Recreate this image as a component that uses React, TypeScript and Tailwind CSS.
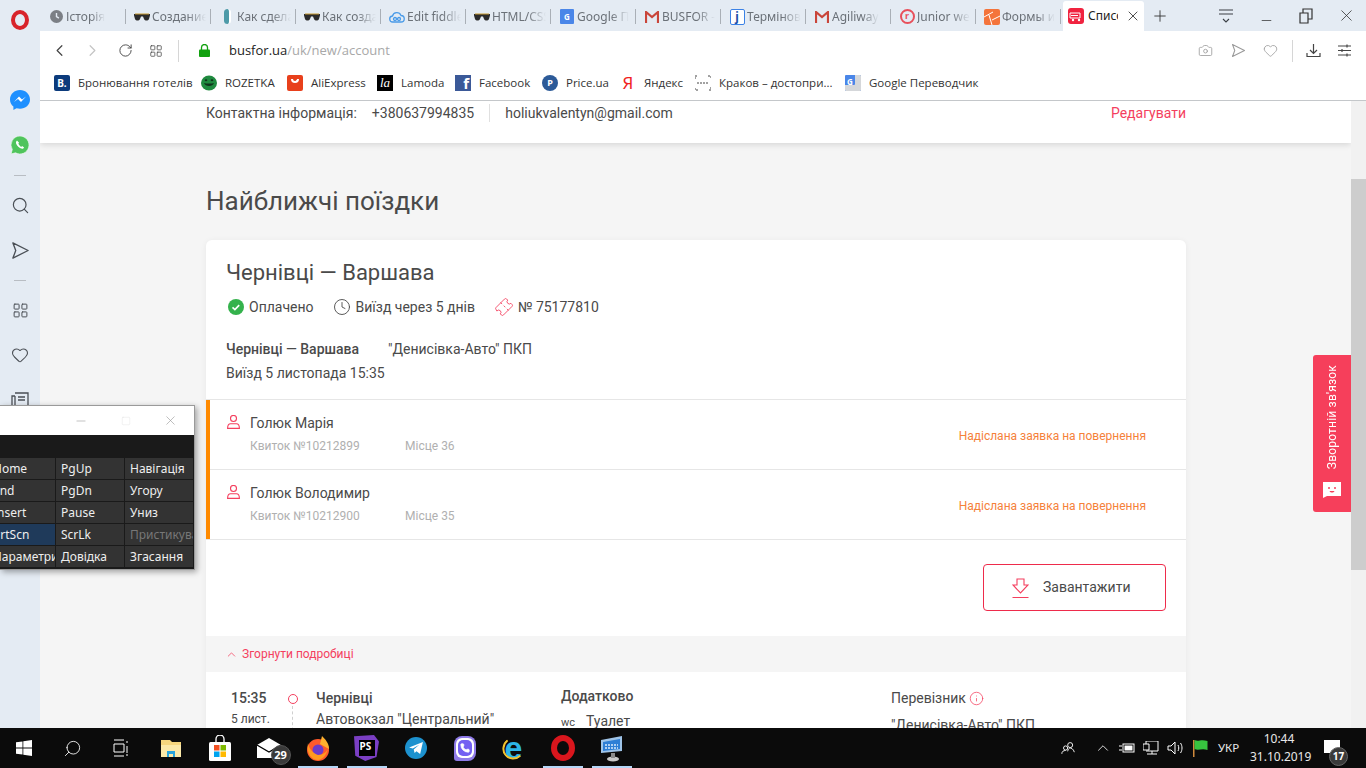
import type { ReactNode } from 'react';
import {
  ChevronLeft,
  ChevronRight,
  ChevronUp,
  Camera,
  Clock,
  Heart,
  Info,
  LayoutGrid,
  Minus,
  Phone,
  Plus,
  RotateCw,
  Search,
  Square,
  Ticket,
  X,
} from 'lucide-react';

const Glasses = () => (
  <svg width="16" height="10" viewBox="0 0 16 10">
    <path d="M0 2h16v1.500L15 7c-1 2-4 2-5 0L9 4.500H7L6 7C5 9 2 9 1 7L0 3.500z" fill="#2b2b2b" />
    <path d="M1 2h14" stroke="#c99a2e" strokeWidth="1" />
  </svg>
);

const Plane = ({ size, color, className }: { size: number; color: string; className?: string }) => (
  <svg width={size} height={size} viewBox="0 0 20 20" fill="none" stroke={color} strokeWidth="1.400" strokeLinejoin="round" className={className}>
    <path d="M2 2l16 8-16 8 3-8z" />
  </svg>
);

const TABS: { icon: ReactNode; label: string }[] = [
  {
    icon: (
      <span className="w-[13px] h-[13px] rounded-full bg-[#7b7f85] flex items-center justify-center">
        <svg width="13" height="13" viewBox="0 0 13 13" fill="none" stroke="#e4ebf3" strokeWidth="1.400">
          <path d="M6.500 3v3.700l2.400 1.500" />
        </svg>
      </span>
    ),
    label: 'Історія',
  },
  { icon: <Glasses />, label: 'Создание' },
  {
    icon: <span className="w-[7px] h-[15px] rounded-full bg-[#4d9aa8] border-r-2 border-white" />,
    label: 'Как сдела',
  },
  { icon: <Glasses />, label: 'Как созда' },
  {
    icon: (
      <svg width="16" height="12" viewBox="0 0 16 12" fill="none" stroke="#4a9be8" strokeWidth="1.300">
        <path d="M4 11a3 3 0 0 1-.5-6A4.500 4.500 0 0 1 12 4.500 3.200 3.200 0 0 1 12 11z" />
        <circle cx="6" cy="8" r="1.500" />
        <circle cx="10" cy="8" r="1.500" />
      </svg>
    ),
    label: 'Edit fiddle',
  },
  { icon: <Glasses />, label: 'HTML/CSS' },
  {
    icon: (
      <span className="w-[14px] h-[15px] bg-[#4a86e8] rounded-[1px] text-white text-[8px] font-bold flex items-center justify-center">G</span>
    ),
    label: 'Google П',
  },
  {
    icon: (
      <svg width="14" height="12" viewBox="0 0 14 12">
        <path d="M1 12V1l6 5 6-5v11" fill="none" stroke="#c9453a" strokeWidth="2.200" />
      </svg>
    ),
    label: 'BUSFOR -',
  },
  {
    icon: (
      <span className="w-[15px] h-[16px] border border-[#3b82e6] rounded-[2px] bg-white text-[#1d4fa8] text-[12px] leading-[14px] font-bold text-center">j</span>
    ),
    label: 'Термінов',
  },
  {
    icon: (
      <svg width="14" height="12" viewBox="0 0 14 12">
        <path d="M1 12V1l6 5 6-5v11" fill="none" stroke="#c9453a" strokeWidth="2.200" />
      </svg>
    ),
    label: 'Agiliway',
  },
  {
    icon: (
      <span className="w-[15px] h-[15px] rounded-full border-2 border-[#e8505b] text-[#e8505b] text-[9px] leading-[10px] font-bold text-center">r</span>
    ),
    label: 'Junior we',
  },
  {
    icon: (
      <svg width="16" height="16" viewBox="0 0 16 16">
        <rect width="16" height="16" rx="2" fill="#f4743b" />
        <path d="M0 8l9-5M5 6l3 10M8 11l8-4" stroke="#fff" strokeWidth="1" />
      </svg>
    ),
    label: 'Формы и',
  },
];

const BOOKMARKS: { icon: ReactNode; label: string; width: string }[] = [
  {
    icon: <span className="w-4 h-4 rounded-[2px] bg-[#0c3b7c] text-white text-[10px] font-bold flex items-center justify-center">B.</span>,
    label: 'Бронювання готелів',
    width: 'w-[147px]',
  },
  {
    icon: (
      <svg width="16" height="16" viewBox="0 0 16 20" preserveAspectRatio="none">
        <ellipse cx="8" cy="10" rx="8" ry="9.500" fill="#1f8a3f" />
        <path d="M3 10c2 1 8 1 10 0-1 5-9 5-10 0z" fill="#10331c" />
        <circle cx="5" cy="6.500" r="1.300" fill="#10331c" />
        <circle cx="11" cy="6.500" r="1.300" fill="#10331c" />
      </svg>
    ),
    label: 'ROZETKA',
    width: 'w-[86px]',
  },
  {
    icon: (
      <span className="w-4 h-4 rounded-[2px] bg-[#e8401c] flex items-start justify-center pt-1">
        <span className="w-2 h-1 border-b-2 border-x-2 border-white rounded-b-full" />
      </span>
    ),
    label: 'AliExpress',
    width: 'w-[90px]',
  },
  {
    icon: <span className="w-4 h-4 bg-black text-white text-[13px] italic flex items-center justify-center [font-family:'Liberation_Serif',serif]">la</span>,
    label: 'Lamoda',
    width: 'w-[78px]',
  },
  {
    icon: <span className="w-4 h-4 bg-[#3b5998] text-white text-[15px] font-bold flex items-end justify-end pr-[2px] leading-[16px] overflow-hidden">f</span>,
    label: 'Facebook',
    width: 'w-[87px]',
  },
  {
    icon: <span className="w-4 h-4 rounded-full bg-[#2c5a98] text-white text-[9px] font-bold flex items-center justify-center">P</span>,
    label: 'Price.ua',
    width: 'w-[78px]',
  },
  {
    icon: <span className="w-4 text-center text-[#f01f1f] text-[17px] leading-[16px]">Я</span>,
    label: 'Яндекс',
    width: 'w-[75px]',
  },
  {
    icon: (
      <svg width="16" height="16" viewBox="0 0 16 16" fill="none" stroke="#444" strokeWidth="1">
        <path d="M0 4V1h3M13 1h3v3M16 12v3h-3M3 15H0v-3M2 8h12" strokeDasharray="2 1" />
      </svg>
    ),
    label: 'Краков – достопри...',
    width: 'w-[150px]',
  },
  {
    icon: (
      <span className="w-4 h-4 bg-[#4a86e8] rounded-[1px] text-white text-[8px] font-bold flex items-start justify-start pl-[2px] pt-[1px] [box-shadow:inset_-6px_-6px_0_#d5d7da]">G</span>
    ),
    label: 'Google Переводчик',
    width: 'w-[140px]',
  },
];

const KEYS: { label: string; dim?: boolean; blue?: boolean; cut?: boolean }[][] = [
  [{ label: 'Home', cut: true }, { label: 'PgUp' }, { label: 'Навігація' }],
  [{ label: 'End', cut: true }, { label: 'PgDn' }, { label: 'Угору' }],
  [{ label: 'Insert', cut: true }, { label: 'Pause' }, { label: 'Униз' }],
  [{ label: 'PrtScn', cut: true, blue: true }, { label: 'ScrLk' }, { label: 'Пристикувати', dim: true }],
  [{ label: 'Параметри', cut: true }, { label: 'Довідка' }, { label: 'Згасання' }],
];

function BrowserTabs() {
  return (
    <div className="h-[31px] flex items-stretch shrink-0 bg-[#e4ebf3]">
      <div className="w-10 flex items-center justify-center shrink-0 pt-[9px]">
        <span className="w-[18px] h-[20px] rounded-[50%] border-[4px] border-[#d8232a]" />
      </div>
      {TABS.map((tab, i) => (
        <div key={tab.label} className={`flex items-center gap-[2px] pl-2 pr-1 mt-[9px] mb-[7px] border-r border-[#a9afb6] ${i === 0 ? 'w-[86px]' : 'w-[85px]'}`}>
          <span className="w-4 flex justify-center shrink-0">{tab.icon}</span>
          <span className="text-[12px] text-[#6b7178] whitespace-nowrap overflow-hidden [mask-image:linear-gradient(90deg,#000_65%,transparent)]">
            {tab.label}
          </span>
        </div>
      ))}
      <div className="w-[2px]" />
      <div className="w-[81px] mt-[1px] bg-white rounded-t-[3px] flex items-center gap-[4px] pl-[5px]">
        <svg width="16" height="16" viewBox="0 0 16 16" className="shrink-0">
          <rect width="16" height="16" rx="3" fill="#f0233f" />
          <path d="M2 5h10v5H2zM3 7.500h7" stroke="#fff" fill="none" />
          <circle cx="5" cy="12" r="1.200" fill="#fff" />
          <circle cx="11" cy="12" r="1.200" fill="#fff" />
        </svg>
        <span className="w-[30px] text-[12px] text-[#222] whitespace-nowrap overflow-hidden">Список</span>
        <X size={16} color="#333" strokeWidth={1.300} className="ml-[3px] shrink-0" />
      </div>
      <div className="w-[31px] flex items-center justify-center">
        <Plus size={18} color="#333" strokeWidth={1.200} />
      </div>
      <div className="flex-1 flex items-center justify-end text-[#333]">
        <div className="w-10 flex justify-center">
          <svg width="16" height="16" viewBox="0 0 16 16" fill="none" stroke="#3a3f45" strokeWidth="1.100">
            <path d="M1 2h14M1 6h14M5 11l3 3 3-3" />
          </svg>
        </div>
        <div className="w-10 flex justify-center">
          <Minus size={15} strokeWidth={1.200} className="translate-y-[5px]" />
        </div>
        <div className="w-10 flex justify-center">
          <svg width="14" height="16" viewBox="0 0 14 16" fill="none" stroke="#333" strokeWidth="1.200">
            <path d="M1 5h8v10H1zM4 5V1h9v10H9" />
          </svg>
        </div>
        <div className="w-10 flex justify-center">
          <X size={19} strokeWidth={1} />
        </div>
      </div>
    </div>
  );
}

function AddressBar() {
  return (
    <div className="h-[39px] flex items-center shrink-0 bg-white">
      <div className="w-[38px] flex justify-center"><ChevronLeft size={19} color="#444" strokeWidth={1.500} /></div>
      <div className="w-[28px] flex justify-center"><ChevronRight size={19} color="#c4c4c4" strokeWidth={1.500} /></div>
      <div className="w-[38px] flex justify-center"><RotateCw size={15} color="#444" strokeWidth={1.500} /></div>
      <div className="w-[24px] flex justify-center"><LayoutGrid size={14} color="#444" strokeWidth={1.300} /></div>
      <div className="w-px h-[22px] bg-[#d6d6d6] ml-[10px]" />
      <svg width="11" height="13" viewBox="0 0 11 13" className="ml-[20px]">
        <path d="M2.500 6V3.500a3 3 0 0 1 6 0V6" fill="none" stroke="#11a10f" strokeWidth="1.300" />
        <rect y="5.500" width="11" height="7.500" rx="1" fill="#11a10f" />
      </svg>
      <div className="ml-[19px] text-[13px] text-[#222] [font-family:'Open_Sans',sans-serif]">
        busfor.ua<span className="text-[#a8a8a8]">/uk/new/account</span>
      </div>
      <div className="flex-1" />
      <Camera size={15} color="#9a9a9a" strokeWidth={1.300} />
      <Plane size={15} color="#9a9a9a" className="ml-[18px]" />
      <Heart size={15} color="#9a9a9a" strokeWidth={1.300} className="ml-[17px]" />
      <div className="w-px h-[22px] bg-[#d6d6d6] ml-[14px]" />
      <svg width="15" height="15" viewBox="0 0 15 15" fill="none" stroke="#444" strokeWidth="1.200" className="ml-[13px]">
        <path d="M7.500 1v9M4 7l3.500 3.500L11 7M1 10v3.500h13V10" />
      </svg>
      <svg width="15" height="15" viewBox="0 0 15 15" fill="none" stroke="#444" strokeWidth="1.200" className="ml-[16px] mr-[14px]">
        <path d="M1 3h13M1 7.500h13M1 12h13M10 1.500v3M5 6v3M10 10.500v3" />
      </svg>
    </div>
  );
}

function Bookmarks() {
  return (
    <div className="h-[31px] flex items-center pl-[14px] pb-[4px] shrink-0 bg-white border-b border-[#c4c7ca]">
      {BOOKMARKS.map((b) => (
        <div key={b.label} className={`flex items-center gap-[8px] shrink-0 ${b.width}`}>
          <span className="w-4 flex justify-center shrink-0">{b.icon}</span>
          <span className="text-[11.500px] text-[#333] whitespace-nowrap [font-family:'Open_Sans',sans-serif]">{b.label}</span>
        </div>
      ))}
    </div>
  );
}

function Sidebar() {
  return (
    <div className="w-10 shrink-0 bg-[#e4ebf3] flex flex-col items-center text-[#4a4f55] overflow-hidden">
      <svg width="20" height="21" viewBox="0 0 20 21" className="mt-[59px] shrink-0">
        <path d="M10 0C4.500 0 0 4 0 9.500c0 3 1.300 5.400 3.400 7V20l3.100-1.700c1.100.3 2.300.5 3.500.5 5.500 0 10-4 10-9.300S15.500 0 10 0z" fill="#1e90ff" />
        <path d="M4 12l5-5.500 3 3 4-3-5 5.500-3-3z" fill="#fff" />
      </svg>
      <svg width="18" height="18" viewBox="0 0 18 18" className="mt-[25px] shrink-0">
        <path d="M9 0a9 9 0 0 0-7.700 13.600L0 18l4.500-1.200A9 9 0 1 0 9 0z" fill="#4fc45c" stroke="#fff" strokeWidth=".6" />
        <path d="M6 4.500c-1 .7-1.300 2-.7 3.500 1 2.300 2.700 3.800 4.800 4.600 1.400.4 2.500-.1 3-1.200l-2-1.300-1 1C9 10 8 9 7.300 7.700l.8-1z" fill="#fff" />
      </svg>
      <div className="w-3 h-px bg-[#b8bdc3] mt-[21px] shrink-0" />
      <Search size={19} strokeWidth={1.500} className="mt-[20px] shrink-0" />
      <Plane size={19} color="#4a4f55" className="mt-[26px] shrink-0" />
      <div className="w-3 h-px bg-[#b8bdc3] mt-[20px] shrink-0" />
      <LayoutGrid size={17} strokeWidth={1.400} className="mt-[21px] shrink-0" />
      <Heart size={18} strokeWidth={1.400} className="mt-[27px] shrink-0" />
      <svg width="18" height="18" viewBox="0 0 18 18" fill="none" stroke="currentColor" strokeWidth="1.300" className="mt-[27px] shrink-0">
        <path d="M4 2h13v14H3a2 2 0 0 1-2-2V5h3M4 5v9M7 6h7M7 9h7" />
      </svg>
    </div>
  );
}

function KeyboardWindow() {
  return (
    <div className="absolute left-0 top-[405px] w-[195px] h-[165px] bg-[#1a1a1a] border border-l-0 border-[#9a9a9a] shadow-[2px_2px_6px_rgba(0,0,0,.35)] overflow-hidden [font-family:'Noto_Sans',sans-serif]">
      <div className="h-[29px] bg-white flex items-center justify-end text-[#999]">
        <Minus size={14} strokeWidth={1} />
        <Square size={10} color="#e0e0e0" strokeWidth={1} className="ml-[33px]" />
        <X size={15} strokeWidth={1} className="ml-[32px] mr-[16px]" />
      </div>
      <div className="pt-[23px] flex flex-col gap-px">
        {KEYS.map((row) => (
          <div key={row[0].label} className="flex gap-px h-[21px] text-[12px] leading-[21px]">
            {row.map((k) => (
              <div
                key={k.label}
                className={`overflow-hidden whitespace-nowrap ${k.cut ? 'w-[55px] -indent-[7px]' : 'w-[68px] pl-[5px]'} ${k.blue ? 'bg-[#1f3a5a]' : 'bg-[#333333]'} ${k.dim ? 'text-[#777]' : 'text-[#eeeeee]'}`}
              >
                {k.label}
              </div>
            ))}
          </div>
        ))}
      </div>
    </div>
  );
}

function Passenger({ name, ticket, seat }: { name: string; ticket: string; seat: string }) {
  return (
    <div className="h-[70px] border-b border-[#e6e6e6] flex items-start pl-[17px] pr-[40px] pt-[13px]">
      <svg width="13" height="14" viewBox="0 0 13 14" fill="none" stroke="#f43f5e" strokeWidth="1.100" className="mt-[2px] shrink-0">
        <circle cx="6.500" cy="3.500" r="3" />
        <path d="M.6 13.400c0-3 1.400-4.700 3-4.700h5.800c1.600 0 3 1.700 3 4.700z" />
      </svg>
      <div className="ml-[10px] flex-1">
        <div className="text-[14px] leading-[20px] text-[#4a4a4a]">{name}</div>
        <div className="flex mt-[4px] text-[12px] leading-[18px] text-[#b0b0b0]">
          <span className="w-[155px]">{ticket}</span>
          <span>{seat}</span>
        </div>
      </div>
      <div className="text-[12px] leading-[18px] text-[#f5813a] mt-[14px]">Надіслана заявка на повернення</div>
    </div>
  );
}

function Page() {
  return (
    <div className="flex-1 min-h-0 flex overflow-hidden bg-[#f5f5f5] [font-family:Roboto,sans-serif]">
      <div className="flex-1 min-w-0 overflow-hidden">
        <div className="h-[42px] bg-white shadow-[0_2px_6px_rgba(0,0,0,.12)] pl-[166px] pr-[165px] flex items-start pt-[3px] text-[14px] leading-[18px] text-[#4a4a4a]">
          <span>Контактна інформація:</span>
          <span className="ml-[15px]">+380637994835</span>
          <span className="w-px h-[18px] bg-[#e0e0e0] ml-[15px]" />
          <span className="ml-[15px]">holiukvalentyn@gmail.com</span>
          <span className="ml-auto text-[#f43f5e]">Редагувати</span>
        </div>

        <div className="ml-[166px] w-[980px]">
          <h1 className="mt-[41px] text-[26px] leading-[34px] text-[#4a4a4a]">Найближчі поїздки</h1>

          <div className="mt-[22px] bg-white rounded-t-[6px] shadow-[0_1px_6px_rgba(0,0,0,.06)]">
            <div className="h-[160px] border-b border-[#e6e6e6] px-[20px] pt-[20px]">
              <div className="text-[22px] leading-[26px] text-[#4a4a4a]">Чернівці — Варшава</div>
              <div className="flex items-center mt-[11px] text-[14px] leading-[20px] text-[#4a4a4a]">
                <svg width="16" height="16" viewBox="0 0 16 16" className="ml-[2px] mr-[5px]">
                  <circle cx="8" cy="8" r="8" fill="#34b24c" />
                  <path d="M4.500 8.300l2.400 2.300 4.300-4.500" fill="none" stroke="#fff" strokeWidth="1.600" />
                </svg>
                <span>Оплачено</span>
                <Clock size={18} color="#4a4a4a" strokeWidth={1.200} className="ml-[19px] mr-[5px]" />
                <span>Виїзд через 5 днів</span>
                <Ticket size={18} color="#f43f5e" strokeWidth={1.100} className="ml-[20px] mr-[5px] rotate-[-45deg]" />
                <span>№ 75177810</span>
              </div>
              <div className="flex mt-[22px] text-[14px] leading-[20px] text-[#4a4a4a]">
                <span className="w-[162px] font-medium">Чернівці — Варшава</span>
                <span>"Денисівка-Авто" ПКП</span>
              </div>
              <div className="mt-[4px] text-[14px] leading-[20px] text-[#4a4a4a]">Виїзд 5 листопада 15:35</div>
            </div>

            <div className="border-l-4 border-[#ff8a00] -mb-px">
              <Passenger name="Голюк Марія" ticket="Квиток №10212899" seat="Місце 36" />
              <Passenger name="Голюк Володимир" ticket="Квиток №10212900" seat="Місце 35" />
            </div>

            <div className="h-[97px] pt-[24px] flex justify-end pr-[20px] border-t border-[#e6e6e6]">
              <div className="w-[183px] h-[47px] border border-[#ee2b4b] rounded-[4px] flex items-center pl-[28px] gap-[14px] text-[14px] text-[#4a4a4a]">
                <svg width="17" height="20" viewBox="0 0 17 20" fill="none" stroke="#f43f5e" strokeWidth="1.100">
                  <path d="M5 1h7v6h4l-7.500 8L1 7h4zM.5 19.500h16" />
                </svg>
                <span>Завантажити</span>
              </div>
            </div>

            <div className="h-[36px] bg-[#f5f5f5] flex items-center pl-[19px] text-[12px] text-[#f43f5e]">
              <ChevronUp size={13} strokeWidth={1.400} />
              <span className="ml-[4px]">Згорнути подробиці</span>
            </div>

            <div className="flex pt-[17px] pl-[25px] h-[120px] text-[14px] leading-[18px] text-[#4a4a4a]">
              <div className="w-[57px]">
                <div className="font-medium">15:35</div>
                <div className="mt-[3px] text-[12px]">5 лист.</div>
              </div>
              <div className="w-[28px] flex flex-col items-start pt-[5px]">
                <span className="w-[10px] h-[10px] rounded-full border border-[#f43f5e]" />
                <span className="h-[30px] ml-[4px] border-l border-dashed border-[#cfcfcf] mt-[2px]" />
              </div>
              <div className="w-[245px]">
                <div className="font-medium">Чернівці</div>
                <div className="mt-[3px]">Автовокзал "Центральний"</div>
              </div>
              <div className="w-[330px] -mt-[2px]">
                <div className="font-medium">Додатково</div>
                <div className="mt-[7px] flex items-end">
                  <span className="w-[25px] text-[11px] leading-[14px]">wc</span>
                  <span>Туалет</span>
                </div>
              </div>
              <div>
                <div className="flex items-center gap-[3px]">
                  <span>Перевізник</span>
                  <Info size={15} color="#f43f5e" strokeWidth={1.200} />
                </div>
                <div className="mt-[9px]">"Денисівка-Авто" ПКП</div>
              </div>
            </div>
          </div>
        </div>
      </div>

      <div className="w-[15px] shrink-0 bg-[#f1f1f1] flex flex-col">
        <div className="h-[78px] shrink-0" />
        <div className="h-[391px] shrink-0 bg-[#cdcdcd]" />
      </div>
    </div>
  );
}

const TASK_APPS: { node: ReactNode; active?: boolean }[] = [
  {
    node: (
      <svg width="22" height="22" viewBox="0 0 22 22">
        <path d="M1 3h9l2 2h9v15H1z" fill="#f5d67e" />
        <path d="M1 8h20v12H1z" fill="#fbe9a9" />
        <path d="M7 14h8v6h-2v-3H9v3H7z" fill="#2aa4dc" />
      </svg>
    ),
  },
  {
    node: (
      <svg width="22" height="26" viewBox="0 0 22 26">
        <path d="M7 7V4a4 4 0 0 1 8 0v3" fill="none" stroke="#fff" strokeWidth="1.300" />
        <rect y="7" width="22" height="19" rx="1.500" fill="#fff" />
        <rect x="5" y="10" width="5.500" height="5.500" fill="#f25022" />
        <rect x="11.500" y="10" width="5.500" height="5.500" fill="#7fba00" />
        <rect x="5" y="16.500" width="5.500" height="5.500" fill="#00a4ef" />
        <rect x="11.500" y="16.500" width="5.500" height="5.500" fill="#ffb900" />
      </svg>
    ),
  },
  {
    node: (
      <span className="relative flex">
        <svg width="24" height="20" viewBox="0 0 24 20">
          <path d="M0 7L12 0l12 7v13H0z" fill="#fff" />
          <path d="M0 7l12 7 12-7" fill="none" stroke="#000" strokeWidth="1.200" />
        </svg>
        <span className="absolute left-[14px] top-[7px] w-[20px] h-[20px] rounded-full bg-[#3a3a3a] border border-[#555] text-white text-[11px] font-bold leading-[18px] text-center">29</span>
      </span>
    ),
  },
  {
    active: true,
    node: (
      <svg width="24" height="26" viewBox="0 0 24 26">
        <circle cx="12" cy="15" r="11" fill="#ff5a2c" />
        <path d="M16 1c3 3 7 7 7 13L14 9z" fill="#ffb02e" />
        <circle cx="12" cy="15" r="5.500" fill="#6d3bc9" />
        <path d="M2 8c1 6 5 10 10 12 5 0 9-3 10-7-1 7-6 12-10 12C6 25 0 19 2 8z" fill="#ff9a1f" />
      </svg>
    ),
  },
  {
    active: true,
    node: (
      <span className="w-[25px] h-[26px] bg-[#7b3fc4] [clip-path:polygon(0_5%,80%_0,100%_25%,90%_85%,45%_100%,5%_80%)] flex items-center justify-center">
        <span className="w-[16px] h-[16px] bg-black text-white text-[10px] font-bold leading-[12px] pl-[1px]">PS</span>
      </span>
    ),
  },
  {
    node: (
      <span className="w-[22px] h-[22px] rounded-full bg-[#1d92cf] flex items-center justify-center">
        <svg width="14" height="12" viewBox="0 0 15 13">
          <path d="M0 6L15 0l-3 13-4-3-2 2-1-4 6-5-7 4z" fill="#fff" />
        </svg>
      </span>
    ),
  },
  {
    node: (
      <span className="w-[22px] h-[25px] rounded-[8px] rounded-bl-[3px] bg-[#8f7be8] flex items-center justify-center">
        <span className="w-[18px] h-[20px] rounded-[6px] bg-white flex items-center justify-center">
          <span className="w-[14px] h-[16px] rounded-[5px] bg-[#7360f2] flex items-center justify-center">
            <Phone size={10} color="#fff" fill="#fff" />
          </span>
        </span>
      </span>
    ),
  },
  {
    node: (
      <span className="relative w-[24px] h-[28px] flex items-center justify-center text-[32px] leading-[26px] font-bold text-[#2cb6e8] [font-family:'Liberation_Sans',sans-serif]">
        e
        <span className="absolute left-0 top-[3px] w-[24px] h-[22px] rounded-[50%] border-2 border-[#f2c12e] rotate-[-40deg] [clip-path:polygon(0_0,50%_0,50%_100%,0_100%)]" />
      </span>
    ),
  },
  {
    active: true,
    node: <span className="w-[24px] h-[26px] rounded-[50%] border-[6px] border-[#d9161d]" />,
  },
  {
    active: true,
    node: (
      <svg width="24" height="28" viewBox="0 0 24 28">
        <path d="M1 6l21-4v15L1 19z" fill="#9fc4e8" />
        <path d="M3 8l17-3v10L3 17z" fill="#2f7fd6" />
        <path d="M5 11h13M5 14h13" stroke="#dcebfb" strokeWidth="1.400" strokeDasharray="2 1" />
        <ellipse cx="13" cy="25" rx="6" ry="2.500" fill="#c9c9c9" />
        <path d="M11 19h4v5h-4z" fill="#8b8b8b" />
      </svg>
    ),
  },
];

function Taskbar() {
  return (
    <div className="h-10 shrink-0 bg-[#0b0b0b] flex items-stretch text-white [font-family:'Noto_Sans',sans-serif]">
      <div className="w-12 flex items-center justify-center">
        <svg width="16" height="16" viewBox="0 0 16 16" fill="#fff">
          <path d="M0 2.300l6.500-.9v6.200H0zM7.300 1.300L16 0v7.600H7.300zM0 8.400h6.500v6.200L0 13.700zM7.300 8.400H16V16l-8.700-1.300z" />
        </svg>
      </div>
      <div className="w-12 flex items-center justify-center">
        <Search size={19} strokeWidth={1.100} className="-scale-x-100" />
      </div>
      <div className="w-[50px] flex items-center justify-center">
        <svg width="17" height="18" viewBox="0 0 17 18" fill="none" stroke="#fff" strokeWidth="1">
          <path d="M1 1h10M1 17h10M1 5h10v8H1zM14 2v2M14 7v7M14 15v2" />
        </svg>
      </div>
      {TASK_APPS.map((app, i) => (
        <div key={i} className="w-[49px] relative flex items-center justify-center">
          {app.node}
          {app.active && <span className="absolute bottom-0 left-[5px] right-[4px] h-[2px] bg-[#b4d6f7]" />}
        </div>
      ))}
      <div className="flex-1" />
      <div className="flex items-center w-[310px] shrink-0 pl-[1px]">
        <svg width="15" height="14" viewBox="0 0 18 16" fill="none" stroke="#fff" strokeWidth="1.100" className="ml-[4px]">
          <circle cx="11" cy="4.500" r="3" />
          <circle cx="5.500" cy="8" r="2.500" />
          <path d="M1 15c0-3 2-4 4.500-4M8 12c.5-3 2-4 3-4s4 1 5 5" />
        </svg>
        <ChevronUp size={18} strokeWidth={1.100} className="ml-[18px]" />
        <svg width="16" height="12" viewBox="0 0 16 12" fill="none" stroke="#fff" strokeWidth="1" className="ml-[7px]">
          <rect x="4" y="2" width="11" height="8" />
          <rect x="6" y="4" width="7" height="4" fill="#fff" />
          <path d="M0 4h3M0 8h3" />
        </svg>
        <svg width="16" height="14" viewBox="0 0 16 14" fill="none" stroke="#fff" strokeWidth="1" className="ml-[8px]">
          <path d="M3 3V0h12v10H3M0 3h6v6H0zM4 13h10M9 10v3" />
        </svg>
        <svg width="17" height="14" viewBox="0 0 17 14" fill="none" stroke="#fff" strokeWidth="1" className="ml-[8px]">
          <path d="M1 5h3l4-4v12L4 9H1zM11 4c1 2 1 4 0 6M13.500 2c2 3 2 7 0 10" />
        </svg>
        <svg width="16" height="18" viewBox="0 0 16 18" className="ml-[8px]">
          <path d="M1 1h1.500v17H1z" fill="#d08a3c" />
          <path d="M2.500 1c4 2 6-1 13 1v9c-6-2-9 1-13-1z" fill="#37c43f" />
        </svg>
        <span className="ml-[10px] w-[22px] text-[11.500px] text-[#e8e8e8] whitespace-nowrap">УКР</span>
        <div className="ml-[10px] w-[58px] text-center text-[12px] leading-[18px] text-[#e8e8e8] whitespace-nowrap">
          <div>10:44</div>
          <div>31.10.2019</div>
        </div>
        <div className="relative ml-[16px] w-[16px] h-[13px] bg-white -translate-y-[2px]">
          <span className="absolute left-[5px] top-[7px] w-[19px] h-[19px] rounded-full bg-[#3a3a3a] border border-[#666] text-[10px] font-bold leading-[17px] text-center">17</span>
        </div>
      </div>
    </div>
  );
}

export default function App() {
  return (
    <div className="relative w-[1366px] h-[768px] overflow-hidden flex flex-col [font-family:'Noto_Sans',sans-serif]">
      <BrowserTabs />
      <div className="flex-1 min-h-0 flex">
        <Sidebar />
        <div className="flex-1 min-w-0 flex flex-col">
          <AddressBar />
          <Bookmarks />
          <Page />
        </div>
      </div>
      <Taskbar />

      <KeyboardWindow />

      <div className="absolute left-[1313px] top-[355px] w-[38px] h-[157px] bg-[#f63f5b] rounded-l-[3px] flex flex-col items-center justify-end pb-[14px] text-white [font-family:Roboto,sans-serif]">
        <span className="[writing-mode:vertical-rl] rotate-180 text-[12px] tracking-[.2px] whitespace-nowrap mb-[13px]">Зворотній зв'язок</span>
        <svg width="20" height="16" viewBox="0 0 20 16">
          <path d="M1 0h18v14H5l-4 2z" fill="#fff" />
          <circle cx="7" cy="6" r="1" fill="#f63f5b" />
          <circle cx="13" cy="6" r="1" fill="#f63f5b" />
          <path d="M7.500 9h5c-1 2-4 2-5 0z" fill="#f63f5b" />
        </svg>
      </div>
    </div>
  );
}
